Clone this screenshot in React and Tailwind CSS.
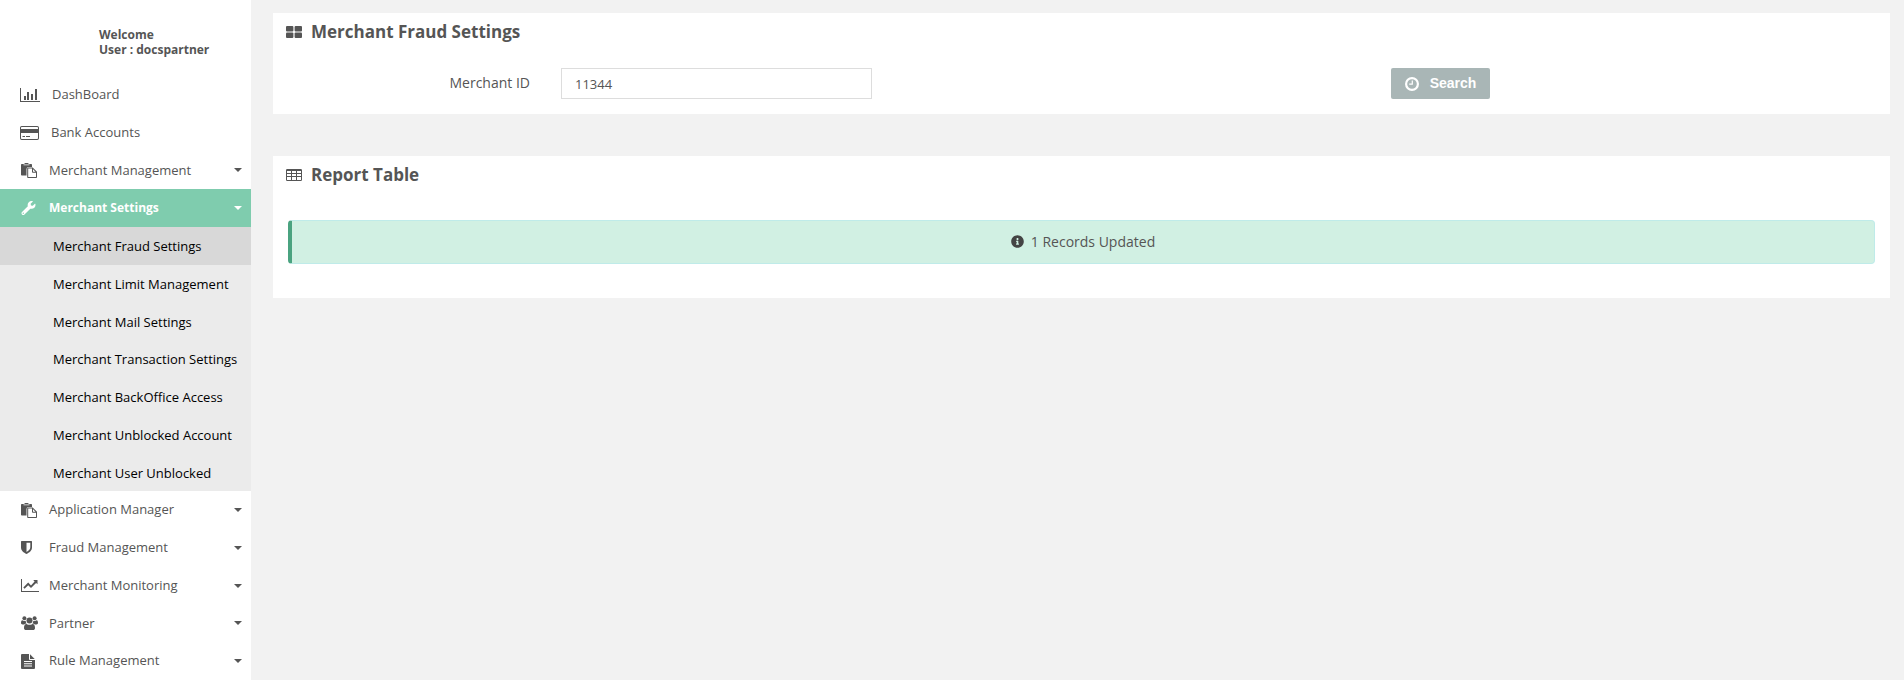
import React from "react";
import { FaWrench, FaInfoCircle } from "react-icons/fa";

function Svg({ viewBox, className, children }) {
  return (
    <svg viewBox={viewBox} className={className} fill="currentColor" aria-hidden="true">
      {children}
    </svg>
  );
}

const BarChart = () => (
  <Svg viewBox="0 0 20 14" className="h-[14px] w-[20px]">
    <path d="M0 0h1v13h19v1H0zM4 8h2v4H4zM7 4h2v8H7zM11 6h2v6h-2zM15 1h2v11h-2z" />
  </Svg>
);

const CreditCard = () => (
  <Svg viewBox="0 0 19 14" className="h-[14px] w-[19px]">
    <path
      fillRule="evenodd"
      d="M1.7 0h15.6A1.7 1.7 0 0 1 19 1.7v10.6a1.7 1.7 0 0 1-1.7 1.7H1.7A1.7 1.7 0 0 1 0 12.3V1.7A1.7 1.7 0 0 1 1.7 0zM1 3h17V1.8a.8.8 0 0 0-.8-.8H1.8a.8.8 0 0 0-.8.8zM1 7v5.2c0 .4.4.8.8.8h15.4c.4 0 .8-.4.8-.8V7zM2.500 10h2.500v1H2.500zM6 10h4v1H6z"
    />
  </Svg>
);

const Paste = () => (
  <Svg viewBox="0 0 16 15" className="ml-[1px] h-[15px] w-[16px]">
    <path
      fillRule="evenodd"
      d="M.8 1h2.400C3.500.4 4 0 5 0h1c1 0 1.500.4 1.800 1h2.400a.8.8 0 0 1 .8.8V4H7.500A2 2 0 0 0 5.500 6v6.500H.8a.8.8 0 0 1-.8-.8V1.800A.8.8 0 0 1 .8 1zM2.500 1.500v.8h6v-.8z"
    />
    <path
      fillRule="evenodd"
      d="M7 4.500h4.700L16 8.800v5.400a.8.8 0 0 1-.8.8H7a.8.8 0 0 1-.8-.8V5.300A.8.8 0 0 1 7 4.500zM7.200 5.500V14H15V9.700h-3.200a.8.8 0 0 1-.8-.8V5.500zM12 6.200v2.500h2.500z"
    />
  </Svg>
);

const Shield = () => (
  <Svg viewBox="0 0 11 13" className="ml-[1px] h-[13px] w-[11px]">
    <path
      fillRule="evenodd"
      d="M.6 0h9.800c.3 0 .6.300.6.600V6.500C11 9.600 8.300 11.700 5.500 13 2.700 11.700 0 9.600 0 6.500V.6C0 .3.300 0 .6 0zM5.500 1.700v9.300c2-1.100 3.800-2.600 3.800-4.700V1.700z"
    />
  </Svg>
);

const LineChart = () => (
  <Svg viewBox="0 0 18 13" className="ml-[1px] h-[13px] w-[18px]">
    <path d="M0 0h1v12h17v1H0z" />
    <path d="M16.500 1v4.300l-1.400-1.400L10 9 7.200 6.200 3.600 9.800 2.300 8.500l4.900-4.900L10 6.400l3.600-3.900L12.200 1z" />
  </Svg>
);

const Users = () => (
  <Svg viewBox="0 0 17 14" className="ml-[1px] h-[14px] w-[17px]">
    <circle cx="3.400" cy="2.200" r="2" />
    <circle cx="13.600" cy="2.200" r="2" />
    <circle cx="8.500" cy="4.500" r="3" />
    <path d="M1.300 4.300C2 4.800 2.700 5 3.400 5c.5 0 .9-.1 1.300-.2 0 1 .3 1.800.9 2.600-1 0-1.800.4-2.400 1H1.600C.6 8.400 0 7.900 0 7c0-1.100.3-2.700 1.300-2.700z" />
    <path d="M15.700 4.300c-.7.5-1.400.7-2.100.7-.5 0-.9-.1-1.300-.2 0 1-.3 1.800-.9 2.600 1 0 1.800.4 2.400 1h1.600c1 0 1.600-.5 1.600-1.400 0-1.100-.3-2.700-1.300-2.700z" />
    <path d="M5.600 7.900c.9.600 1.800.9 2.900.9s2-.3 2.900-.9c2 0 2.600 2 2.600 4 0 1.300-.8 2.100-2.100 2.100H5.100C3.800 14 3 13.200 3 11.900c0-2 .6-4 2.600-4z" />
  </Svg>
);

const FileText = () => (
  <Svg viewBox="0 0 14 15" className="ml-[1px] h-[15px] w-[14px]">
    <path
      fillRule="evenodd"
      d="M1 0h7v5.200c0 .5.400.8.800.8H14v8a1 1 0 0 1-1 1H1a1 1 0 0 1-1-1V1a1 1 0 0 1 1-1zM3 7v1h8V7zM3 9.300v1h8v-1zM3 11.600v1h8v-1z"
    />
    <path d="M9 0.300 13.700 5H9z" />
  </Svg>
);

const ThLarge = () => (
  <Svg viewBox="0 0 16 12" className="h-[12px] w-[16px]">
    <rect width="7.400" height="5.500" rx="1" />
    <rect x="8.600" width="7.400" height="5.500" rx="1" />
    <rect y="6.500" width="7.400" height="5.500" rx="1" />
    <rect x="8.600" y="6.500" width="7.400" height="5.500" rx="1" />
  </Svg>
);

const TableIcon = () => (
  <Svg viewBox="0 0 16 12" className="h-[12px] w-[16px]">
    <path
      fillRule="evenodd"
      d="M1.300 0h13.400A1.300 1.300 0 0 1 16 1.300v9.400a1.300 1.300 0 0 1-1.300 1.300H1.300A1.300 1.300 0 0 1 0 10.700V1.300A1.300 1.300 0 0 1 1.300 0zM1 2v2h4V2zM6 2v2h4V2zM11 2v2h4V2zM1 5v2h4V5zM6 5v2h4V5zM11 5v2h4V5zM1 8v3h4V8zM6 8v3h4V8zM11 8v3h4V8z"
    />
  </Svg>
);

const Clock = () => (
  <Svg viewBox="0 0 14 14" className="h-[14px] w-[14px]">
    <path
      fillRule="evenodd"
      d="M7 0a7 7 0 1 1 0 14A7 7 0 0 1 7 0zM7 2.200a4.800 4.800 0 1 0 0 9.600 4.800 4.800 0 0 0 0-9.600z"
    />
    <path d="M6.700 3.600h1.200v4.200H4.200V6.600h2.500z" />
  </Svg>
);

const Caret = () => (
  <Svg viewBox="0 0 8 4" className="ml-auto h-[4px] w-[8px]">
    <path d="M0 0h8L4 4z" />
  </Svg>
);

const MENU = [
  { label: "DashBoard", icon: <BarChart />, pad: "pl-[3px]" },
  { label: "Bank Accounts", icon: <CreditCard />, pad: "pl-[2px]" },
  { label: "Merchant Management", icon: <Paste />, caret: true },
  {
    label: "Merchant Settings",
    icon: <FaWrench className="ml-[1px] h-[14px] w-[15px]" />,
    caret: true,
    children: [
      "Merchant Fraud Settings",
      "Merchant Limit Management",
      "Merchant Mail Settings",
      "Merchant Transaction Settings",
      "Merchant BackOffice Access",
      "Merchant Unblocked Account",
      "Merchant User Unblocked",
    ],
  },
  { label: "Application Manager", icon: <Paste />, caret: true },
  { label: "Fraud Management", icon: <Shield />, caret: true },
  { label: "Merchant Monitoring", icon: <LineChart />, caret: true },
  { label: "Partner", icon: <Users />, caret: true },
  { label: "Rule Management", icon: <FileText />, caret: true },
];

function Sidebar() {
  return (
    <aside className="flex w-[251px] shrink-0 flex-col bg-white">
      <div className="h-[76px] pt-[27px] pl-[99px] text-[12px] leading-[15px] font-bold">
        <p>Welcome</p>
        <p>User : docspartner</p>
      </div>
      <nav className="flex grow flex-col">
        {MENU.map((item) => (
          <React.Fragment key={item.label}>
            <a
              href="#"
              className={`flex flex-1 items-center pr-[9px] pl-[20px] ${
                item.children ? "bg-[#7fccae] text-[12px] font-bold text-white" : "text-[13px]"
              }`}
            >
              <span className="flex w-[29px] items-center">{item.icon}</span>
              <span className={item.pad}>{item.label}</span>
              {item.caret && <Caret />}
            </a>
            {item.children?.map((child, i) => (
              <a
                key={child}
                href="#"
                className={`flex flex-1 items-center pl-[53px] text-[13px] text-black ${
                  i === 0 ? "bg-[#d8d8d8]" : "bg-[#ebebeb]"
                }`}
              >
                <span className="pt-[2px]">{child}</span>
              </a>
            ))}
          </React.Fragment>
        ))}
      </nav>
    </aside>
  );
}

function PanelTitle({ icon, children }) {
  return (
    <h2 className="flex items-center gap-[9px] px-[13px] text-[17px] leading-[20px] font-bold">
      {icon}
      {children}
    </h2>
  );
}

export default function App() {
  return (
    <div className="flex min-h-screen bg-[#f2f2f2] font-['Open_Sans',sans-serif] text-[#555]">
      <Sidebar />
      <main className="flex grow flex-col gap-[42px] py-[13px] pr-[14px] pl-[22px]">
        <section className="bg-white pt-[9px] pb-[15px]">
          <PanelTitle icon={<ThLarge />}>Merchant Fraud Settings</PanelTitle>
          <form
            className="mt-[26px] grid grid-cols-[257fr_311fr_457fr_499fr] items-center gap-x-[31px]"
            onSubmit={(e) => e.preventDefault()}
          >
            <label htmlFor="merchant-id" className="pb-[2px] text-right text-[14px] font-medium">
              Merchant ID
            </label>
            <input
              id="merchant-id"
              type="text"
              defaultValue="11344"
              className="h-[31px] w-full min-w-0 border border-[#ddd] bg-white px-[13px] text-[13px] outline-none"
            />
            <button
              type="submit"
              className="col-start-4 flex h-[31px] w-[99px] items-center justify-center gap-[11px] rounded-[2px] bg-[#a9b6b6] font-['Liberation_Sans',sans-serif] text-[14px] font-bold text-white"
            >
              <Clock />
              Search
            </button>
          </form>
        </section>
        <section className="bg-white pt-[9px] pb-[34px]">
          <PanelTitle icon={<TableIcon />}>Report Table</PanelTitle>
          <div
            role="status"
            className="mx-[15px] mt-[35px] flex h-[44px] items-center justify-center gap-[7px] rounded-[4px] border border-l-4 border-[#bfebe9] border-l-[#4aa380] bg-[#d1f0e3] pb-[2px] text-[14px]"
          >
            <FaInfoCircle className="h-[13px] w-[13px] text-[#444]" />
            1 Records Updated
          </div>
        </section>
      </main>
    </div>
  );
}
